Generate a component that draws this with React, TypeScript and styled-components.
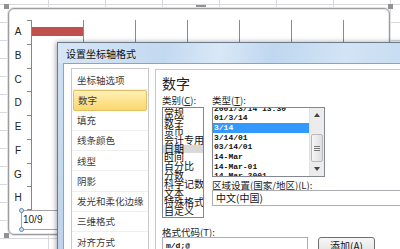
import React from 'react'
import styled, { createGlobalStyle } from 'styled-components'

const CJK = `'Noto Sans CJK SC', 'Noto Sans', sans-serif`
const MONO = `'Liberation Mono', 'DejaVu Sans Mono', monospace`

const GlobalStyle = createGlobalStyle`
  html, body {
    margin: 0;
    padding: 0;
  }
  body {
    width: 400px;
    height: 249px;
    overflow: hidden;
    background: #fff;
    font-family: ${CJK};
  }
`

/* Spreadsheet behind the chart */
const Sheet = styled.div`
  position: relative;
  width: 400px;
  height: 249px;
  overflow: hidden;
  box-sizing: border-box;
  padding: 8px 0 0 8px;
  background-color: #fff;
  background-image:
    linear-gradient(90deg, #d6d9dd 1px, transparent 1px),
    linear-gradient(#d6d9dd 1px, transparent 1px);
  background-size: 57px 100%, 100% 18px;
  background-position: 48px 0, 0 4px;
`

const ChartFrame = styled.div`
  position: relative;
  box-sizing: border-box;
  width: 382px;
  height: 227px;
  border: 1px solid #9d9d9d;
  border-radius: 6px;
  background: #fff;
  box-shadow: 0 0 0 1px #e2e2e2, inset 0 0 0 1px #e6e6e6;
  padding-top: 11px;
`

const Grip = styled.div<{ $x: number; $y: number; $w: number; $h: number }>`
  position: absolute;
  left: ${(p) => p.$x}px;
  top: ${(p) => p.$y}px;
  width: ${(p) => p.$w}px;
  height: ${(p) => p.$h}px;
  background-image: radial-gradient(circle, #8f8f8f 0.7px, transparent 1px);
  background-size: 2px 2px;
`

const CategoryRow = styled.div`
  display: flex;
  height: 23.75px;
`

const CategoryLabel = styled.div`
  width: 18px;
  text-align: center;
  font: 10px/23.75px 'Liberation Sans', Arial, sans-serif;
  color: #222;
`

const Tick = styled.div<{ $last?: boolean }>`
  box-sizing: border-box;
  width: 4px;
  border-top: 1px solid #868686;
  border-bottom: ${(p) => (p.$last ? '1px solid #868686' : 'none')};
`

const Track = styled.div`
  flex: 1;
  display: flex;
  align-items: center;
  border-left: 1px solid #868686;
  background-image: repeating-linear-gradient(90deg, transparent 0 51px, #8a8a8a 51px 52px);
`

const Bar = styled.div`
  height: 9px;
  background: #c0504d;
`

const AxisBox = styled.div`
  position: relative;
  display: flex;
  box-sizing: border-box;
  margin-left: 12px;
  width: 360px;
  height: 20px;
  border: 1px solid #a3a3a3;
`

const AxisLabel = styled.div`
  width: 52px;
  flex-shrink: 0;
  padding-left: 1px;
  font: 10px/18px 'Liberation Sans', Arial, sans-serif;
  color: #222;
`

const AxisHandle = styled.div<{ $bottom?: boolean }>`
  position: absolute;
  left: -3px;
  ${(p) => (p.$bottom ? 'bottom: -3px;' : 'top: -3px;')}
  width: 5px;
  height: 5px;
  box-sizing: border-box;
  border-radius: 50%;
  border: 1px solid #5b86b8;
  background: #cfe2f6;
`

/* Format dialog */
const Dialog = styled.div`
  position: absolute;
  left: 57px;
  top: 42px;
  width: 360px;
  height: 230px;
  box-sizing: border-box;
  border: 1px solid #6a7b90;
  background: linear-gradient(180deg, #cfe0f3, #bcd2ea);
  box-shadow: -1px 0 5px rgba(0, 0, 0, 0.35);
  display: flex;
  flex-direction: column;
`

const TitleBar = styled.div`
  height: 20px;
  display: flex;
  align-items: center;
  padding-left: 8px;
  font-size: 10px;
  color: #111;
  background: linear-gradient(100deg, #d7e6f6 0%, #c3d9f0 30%, #d9e8f7 45%, #c0d7ef 60%, #d2e4f5 80%, #c6dbf1 100%);
`

const Body = styled.div`
  flex: 1;
  display: flex;
  align-items: flex-start;
  margin-left: 5px;
  padding: 4px 0 0 7px;
  border-top: 1px solid #8ea2ba;
  border-left: 1px solid #8ea2ba;
  background: #fdfdfd;
`

const Nav = styled.div`
  box-sizing: border-box;
  width: 78px;
  height: 200px;
  padding-top: 1px;
  border: 1px solid #c9c9c9;
  background: #fff;
`

const NavItem = styled.div<{ $active?: boolean }>`
  box-sizing: border-box;
  height: 20.25px;
  display: flex;
  align-items: center;
  padding-left: ${(p) => (p.$active ? 4 : 5)}px;
  margin: 0 ${(p) => (p.$active ? 1 : 0)}px;
  font-size: 9.5px;
  color: #3c3c3c;
  border: ${(p) => (p.$active ? '1px solid #e2bf62' : 'none')};
  border-bottom: 1px solid ${(p) => (p.$active ? '#e2bf62' : '#efefef')};
  border-radius: ${(p) => (p.$active ? 2 : 0)}px;
  background: ${(p) => (p.$active ? 'linear-gradient(180deg, #fef0b8, #fbd76c)' : 'transparent')};
`

const Panel = styled.div`
  flex: 1;
  height: 200px;
  margin: 1px 0 0 6px;
  padding-left: 6px;
  border: 1px solid #c9c9c9;
  background: #fff;
`

const Heading = styled.div`
  margin-top: 6px;
  font-size: 14px;
  line-height: 14px;
  color: #222;
`

const Columns = styled.div`
  display: flex;
  gap: 8px;
  margin-top: 5px;
  height: 123px;
`

const Column = styled.div<{ $width?: number }>`
  display: flex;
  flex-direction: column;
  ${(p) => (p.$width ? `width: ${p.$width}px;` : 'flex: 1;')}
`

const FieldLabel = styled.div<{ $gap?: number }>`
  margin-top: ${(p) => p.$gap ?? 0}px;
  font-size: 9.5px;
  line-height: 10px;
  color: #222;
  white-space: nowrap;
`

const CategoryList = styled.div`
  box-sizing: border-box;
  margin-top: 2px;
  height: 111px;
  padding-top: 1px;
  border: 1px solid #828790;
  overflow: hidden;
`

const CategoryItem = styled.div<{ $selected?: boolean }>`
  height: 8.9px;
  line-height: 8.9px;
  font-size: 10px;
  padding-left: 1px;
  white-space: nowrap;
  color: #111;
  background: ${(p) => (p.$selected ? '#d9d9d9' : 'transparent')};
`

const TypeList = styled.div`
  box-sizing: border-box;
  display: flex;
  margin-top: 2px;
  width: 113px;
  height: 70px;
  border: 1px solid #828790;
`

const TypeItems = styled.div`
  flex: 1;
  overflow: hidden;
`

const TypeScroll = styled.div`
  margin-top: -4.4px;
`

const TypeItem = styled.div<{ $selected?: boolean }>`
  height: 9.7px;
  line-height: 9.7px;
  padding-left: 1px;
  font: 8px/9.7px ${MONO};
  font-weight: bold;
  white-space: nowrap;
  color: ${(p) => (p.$selected ? '#fff' : '#111')};
  background: ${(p) => (p.$selected ? '#3399ff' : 'transparent')};
`

const ScrollBar = styled.div`
  width: 14px;
  display: flex;
  flex-direction: column;
  align-items: center;
  background: #ececec;
  border-left: 1px solid #e2e2e2;
`

const ScrollArrow = styled.div`
  height: 14px;
  display: flex;
  align-items: center;
  justify-content: center;
`

const Thumb = styled.div`
  box-sizing: border-box;
  margin-top: 12px;
  width: 12px;
  height: 28px;
  display: flex;
  align-items: center;
  justify-content: center;
  border: 1px solid #b9b9b9;
  border-radius: 2px;
  background: linear-gradient(90deg, #f6f6f6, #dedede);
`

const Combo = styled.div`
  box-sizing: border-box;
  width: 200px;
  height: 16px;
  padding-left: 3px;
  border: 1px solid #abadb3;
  font-size: 10px;
  line-height: 14px;
  color: #111;
`

const FaintLine = styled.div<{ $left: number; $width: number; $gap: number }>`
  margin: ${(p) => p.$gap}px 0 0 ${(p) => p.$left}px;
  width: ${(p) => p.$width}px;
  height: 1px;
  background: #d2d2d2;
`

const InputRow = styled.div`
  display: flex;
  gap: 10px;
`

const TextInput = styled.div`
  box-sizing: border-box;
  width: 146px;
  height: 20px;
  padding-left: 3px;
  border: 1px solid #abadb3;
  font: bold 8px/15px ${MONO};
  color: #111;
`

const Button = styled.div`
  box-sizing: border-box;
  width: 57px;
  height: 20px;
  border: 1px solid #707070;
  border-radius: 3px;
  background: linear-gradient(180deg, #f6f6f6, #e0e0e0);
  text-align: center;
  font-size: 10px;
  line-height: 15px;
  color: #111;
`

const Arrow = ({ down }: { down?: boolean }) => (
  <svg width="6" height="4" viewBox="0 0 6 4">
    <path d={down ? 'M0 0h6L3 4z' : 'M0 4h6L3 0z'} fill="#444" />
  </svg>
)

const Grippy = () => (
  <svg width="6" height="5" viewBox="0 0 6 5">
    <path d="M0 0.5h6M0 2.5h6M0 4.5h6" stroke="#7b7b7b" strokeWidth="1" />
  </svg>
)

const rows = ['A', 'B', 'C', 'D', 'E', 'F', 'G', 'H']
// only A's bar starts inside the visible part of the plot
const bars: Record<string, [number, number]> = { A: [0, 51] }

const navItems = ['坐标轴选项', '数字', '填充', '线条颜色', '线型', '阴影', '发光和柔化边缘', '三维格式', '对齐方式']
const categories = ['常规', '数字', '货币', '会计专用', '日期', '时间', '百分比', '分数', '科学记数', '文本', '特殊格式', '自定义']
const types = ['2001/3/14 13:30', '01/3/14', '3/14', '3/14/01', '03/14/01', '14-Mar', '14-Mar-01', '14-Mar-2001']

const App: React.FC = () => {
  return (
    <>
      <GlobalStyle />
      <Sheet>
        <ChartFrame>
          <Grip $x={-5} $y={-5} $w={5} $h={5} />
          <Grip $x={187} $y={-4} $w={10} $h={2} />
          <Grip $x={379} $y={-5} $w={5} $h={5} />
          <Grip $x={-5} $y={224} $w={5} $h={5} />

          {rows.map((r, i) => (
            <CategoryRow key={r}>
              <CategoryLabel>{r}</CategoryLabel>
              <Tick $last={i === rows.length - 1} />
              <Track>
                {bars[r] && <Bar style={{ marginLeft: bars[r][0], width: bars[r][1] }} />}
              </Track>
            </CategoryRow>
          ))}

          <AxisBox>
            <AxisHandle />
            <AxisHandle $bottom />
            <AxisLabel>10/9</AxisLabel>
          </AxisBox>
        </ChartFrame>

        <Dialog>
          <TitleBar>设置坐标轴格式</TitleBar>
          <Body>
            <Nav>
              {navItems.map((n) => (
                <NavItem key={n} $active={n === '数字'}>{n}</NavItem>
              ))}
            </Nav>
            <Panel>
              <Heading>数字</Heading>
              <Columns>
                <Column $width={42}>
                  <FieldLabel>类别(<u>C</u>):</FieldLabel>
                  <CategoryList>
                    {categories.map((c) => (
                      <CategoryItem key={c} $selected={c === '日期'}>{c}</CategoryItem>
                    ))}
                  </CategoryList>
                </Column>
                <Column>
                  <FieldLabel>类型(<u>T</u>):</FieldLabel>
                  <TypeList>
                    <TypeItems>
                      <TypeScroll>
                        {types.map((t) => (
                          <TypeItem key={t} $selected={t === '3/14'}>{t}</TypeItem>
                        ))}
                      </TypeScroll>
                    </TypeItems>
                    <ScrollBar>
                      <ScrollArrow><Arrow /></ScrollArrow>
                      <Thumb><Grippy /></Thumb>
                      <ScrollArrow style={{ marginTop: 'auto' }}><Arrow down /></ScrollArrow>
                    </ScrollBar>
                  </TypeList>
                  <FieldLabel $gap={3}>区域设置(国家/地区)(<u>L</u>):</FieldLabel>
                  <Combo>中文(中国)</Combo>
                  <FaintLine $left={48} $width={125} $gap={16} />
                  <FaintLine $left={118} $width={25} $gap={7} />
                </Column>
              </Columns>
              <FieldLabel $gap={9}>格式代码(<u>T</u>):</FieldLabel>
              <InputRow>
                <TextInput>m/d;@</TextInput>
                <Button>添加(<u>A</u>)</Button>
              </InputRow>
            </Panel>
          </Body>
        </Dialog>
      </Sheet>
    </>
  )
}

export default App
